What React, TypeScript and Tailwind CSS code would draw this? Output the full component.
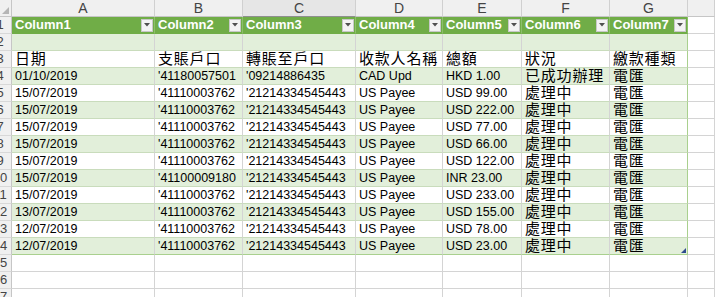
import React from "react";

const cols = ["A", "B", "C", "D", "E", "F", "G", ""];

const header = ["Column1", "Column2", "Column3", "Column4", "Column5", "Column6", "Column7"];

const P = "'21214334545443";
const data: string[][] = [
  ["", "", "", "", "", "", ""],
  ["日期", "支賬戶口", "轉賬至戶口", "收款人名稱", "總額", "狀況", "繳款種類"],
  ["01/10/2019", "'41180057501", "'09214886435", "CAD Upd", "HKD 1.00", "已成功辦理", "電匯"],
  ["15/07/2019", "'41110003762", P, "US Payee", "USD 99.00", "處理中", "電匯"],
  ["15/07/2019", "'41110003762", P, "US Payee", "USD 222.00", "處理中", "電匯"],
  ["15/07/2019", "'41110003762", P, "US Payee", "USD 77.00", "處理中", "電匯"],
  ["15/07/2019", "'41110003762", P, "US Payee", "USD 66.00", "處理中", "電匯"],
  ["15/07/2019", "'41110003762", P, "US Payee", "USD 122.00", "處理中", "電匯"],
  ["15/07/2019", "'41100009180", P, "US Payee", "INR 23.00", "處理中", "電匯"],
  ["15/07/2019", "'41110003762", P, "US Payee", "USD 233.00", "處理中", "電匯"],
  ["13/07/2019", "'41110003762", P, "US Payee", "USD 155.00", "處理中", "電匯"],
  ["12/07/2019", "'41110003762", P, "US Payee", "USD 78.00", "處理中", "電匯"],
  ["12/07/2019", "'41110003762", P, "US Payee", "USD 23.00", "處理中", "電匯"],
];

const isCJK = (s: string) => /[\u3400-\u9fff]/.test(s);

function RowHead({ n }: { n: number }) {
  return (
    <div className="overflow-hidden border-r border-b border-r-[#c6c6c6] border-b-[#d8d8d8] bg-[#f0f0f0] text-[13px] leading-[16px] text-[#444]">
      <div className="-ml-[12px] w-[24px] text-center">{n}</div>
    </div>
  );
}

function DropBtn() {
  return (
    <div className="mr-[1px] flex h-[13px] w-[12px] shrink-0 items-center justify-center border border-[#c8c8c8] bg-[#f3f3f3]">
      <svg width="6" height="4" viewBox="0 0 6 4">
        <path d="M0 0 L6 0 L3 3.5 Z" fill="#505050" />
      </svg>
    </div>
  );
}

export default function App() {
  const rows: React.ReactNode[] = [];

  // column letters row
  rows.push(
    <div key="corner" className="relative border-r border-b border-r-[#c6c6c6] border-b-[#c6c6c6] bg-[#f0f0f0]">
      <svg className="absolute bottom-[2px] right-[2px]" width="7" height="7" viewBox="0 0 7 7">
        <path d="M7 0 L7 7 L0 7 Z" fill="#b5b5b5" />
      </svg>
    </div>
  );
  cols.forEach((c, i) => {
    rows.push(
      <div
        key={"h" + i}
        className={
          i === 2
            ? "border-r border-b border-r-[#d0d0d0] border-b-[#8f8f8f] bg-[#e6e6e6] text-center text-[14px] leading-[16px] text-[#444]"
            : "border-r border-b border-r-[#d0d0d0] border-b-[#c6c6c6] bg-[#f0f0f0] text-center text-[14px] leading-[16px] text-[#444]"
        }
      >
        {c}
      </div>
    );
  });

  // row 1 table header
  rows.push(<RowHead key="r1" n={1} />);
  header.forEach((h, i) => {
    rows.push(
      <div
        key={"th" + i}
        className="flex items-center justify-between overflow-hidden whitespace-nowrap border-r border-b border-r-[#8cbf6a] border-b-[#70ad47] bg-[#70ad47] pl-[3px] text-[13px] font-bold leading-[16px] text-white"
      >
        <span>{h}</span>
        <DropBtn />
      </div>
    );
  });
  rows.push(<div key="th-h" className="border-r border-b border-[#d4d4d4] bg-white" />);

  // data rows 2..14
  data.forEach((r, ri) => {
    const n = ri + 2;
    const green = n % 2 === 0;
    const last = n === 14;
    rows.push(<RowHead key={"rh" + n} n={n} />);
    r.forEach((v, ci) => {
      const cls = [
        "relative overflow-hidden whitespace-nowrap border-r border-b pl-[3px] text-black",
        green ? "bg-[#e2efda]" : "bg-white",
        ci === 6 ? "border-r-[#a9d08e]" : "border-r-[#d4d4d4]",
        last ? "border-b-[#a9d08e]" : "border-b-[#c9dcbc]",
        isCJK(v) ? "text-[15px] leading-[16px] tracking-[0.8px]" : "text-[12.5px] leading-[16px]",
      ].join(" ");
      rows.push(
        <div key={"c" + n + "-" + ci} className={cls}>
          {v}
          {last && ci === 6 ? (
            <svg className="absolute bottom-[1px] right-[1px]" width="5" height="5" viewBox="0 0 5 5">
              <path d="M5 0 L5 5 L0 5 Z" fill="#2f4b8f" />
            </svg>
          ) : null}
        </div>
      );
    });
    rows.push(<div key={"hx" + n} className="border-r border-b border-[#d4d4d4] bg-white" />);
  });

  // empty rows 15..17
  [15, 16, 17].forEach((n) => {
    rows.push(<RowHead key={"rh" + n} n={n} />);
    for (let ci = 0; ci < 8; ci++) {
      rows.push(<div key={"e" + n + "-" + ci} className="border-r border-b border-[#d4d4d4] bg-white" />);
    }
  });

  return (
    <div className="h-[297px] w-[715px] overflow-hidden bg-white font-['Liberation_Sans','Noto_Sans_CJK_TC',sans-serif]">
      <div className="grid auto-rows-[17px] grid-cols-[12px_143px_88px_113px_87px_79px_88px_78px_1fr]">
        {rows}
      </div>
    </div>
  );
}
